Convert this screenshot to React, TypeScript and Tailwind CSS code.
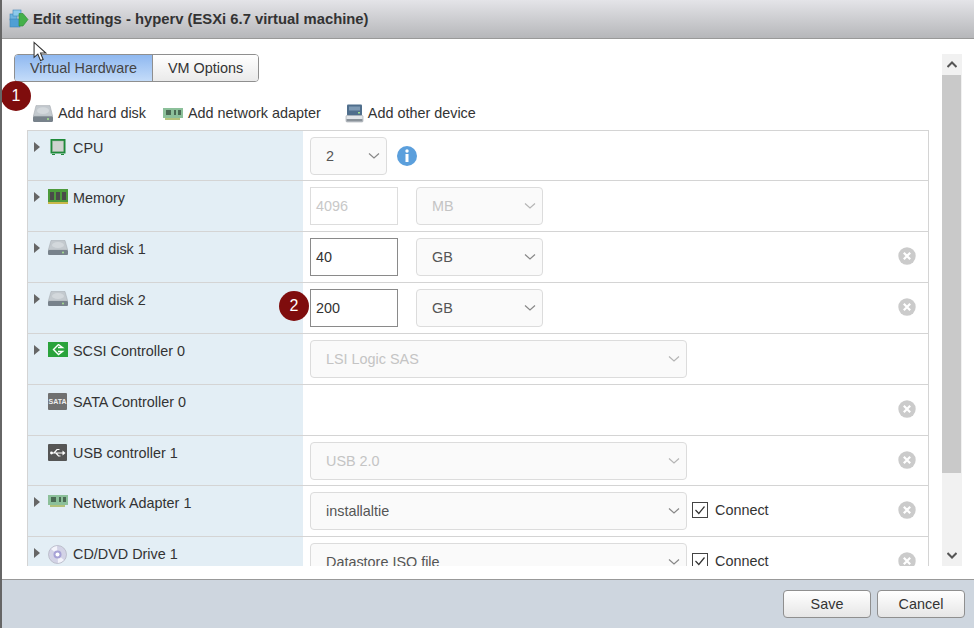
import React from "react";

const Chevron = ({ className = "text-[#777]" }: { className?: string }) => (
  <svg width="14" height="8" viewBox="0 0 14 8" className={className}>
    <path d="M2 1.5 L7 6 L12 1.5" fill="none" stroke="currentColor" strokeWidth="1.2" />
  </svg>
);

const Select = ({ value, width, disabled }: { value: string; width: string; disabled?: boolean }) => (
  <div
    className={`${width} h-[38px] flex items-center justify-between pl-[15px] pr-[5px] rounded-[4px] border border-[#dcdcdc] bg-[#fafafa] ${
      disabled ? "text-[#c4c4c4]" : "text-[#555]"
    }`}
  >
    <span className="pt-[1px]">{value}</span>
    <Chevron className={disabled ? "text-[#b5b5b5]" : "text-[#888]"} />
  </div>
);

const NumInput = ({ value, disabled }: { value: string; disabled?: boolean }) => (
  <div
    className={`w-[88px] h-[38px] flex items-center pl-[5px] pt-[1px] border bg-white ${
      disabled ? "border-[#ddd] text-[#c8c8c8]" : "border-[#8a8a8a] text-[#333]"
    }`}
  >
    {value}
  </div>
);

const RemoveIcon = () => (
  <svg width="18" height="18" viewBox="0 0 18 18" className="absolute left-[870px] top-[15px]">
    <circle cx="9" cy="9" r="8.7" fill="#cbcbcb" />
    <path d="M5.8 5.8 L12.2 12.2 M12.2 5.8 L5.8 12.2" stroke="#fff" strokeWidth="2.2" />
  </svg>
);

const Connect = () => (
  <div className="flex items-center gap-[6px] ml-[5px] -mt-[1px] text-[#333]">
    <svg width="17" height="17" viewBox="0 0 17 17">
      <rect x="0.5" y="0.5" width="15" height="15" fill="#fff" stroke="#444" />
      <path d="M3.5 8 L6.8 11.5 L12.5 4.5" fill="none" stroke="#333" strokeWidth="1.2" />
    </svg>
    <span>Connect</span>
  </div>
);

const CpuIcon = () => (
  <svg width="20" height="16" viewBox="0 0 20 16">
    <rect x="2.5" y="0" width="15" height="14.5" fill="#1f8a3a" />
    <rect x="4.5" y="2" width="11" height="10.5" fill="#cfd3cf" stroke="#9fb09f" strokeWidth="0.5" />
    <path d="M4 15.5 H7 M13 15.5 H16" stroke="#1f8a3a" />
  </svg>
);

const MemoryIcon = () => (
  <svg width="20" height="16" viewBox="0 0 20 16">
    <rect x="0" y="0" width="20" height="15" fill="#4d9a3c" />
    <rect x="2" y="3" width="4" height="8" fill="#4a4a4a" />
    <rect x="8" y="3" width="4" height="8" fill="#4a4a4a" />
    <rect x="14" y="3" width="4" height="8" fill="#4a4a4a" />
    <rect x="0" y="13" width="20" height="2" fill="#c9b84a" />
  </svg>
);

const DiskIcon = ({ tall }: { tall?: boolean }) => (
  <svg width="20" height={tall ? 18 : 16} viewBox="0 0 20 16" preserveAspectRatio="none">
    <path d="M3 0.5 H17 L19.7 10 H0.3 Z" fill="#c3c9ce" stroke="#a3a9ae" strokeWidth="0.5" />
    <ellipse cx="10" cy="5" rx="6" ry="3" fill="#d3d8dc" />
    <rect x="0" y="10" width="20" height="5" rx="1" fill="#78828b" />
    <circle cx="15" cy="12.5" r="1" fill="#a6e08f" />
  </svg>
);

const ScsiIcon = () => (
  <svg width="20" height="16" viewBox="0 0 20 16">
    <rect x="0" y="0" width="20" height="15" fill="#2aa33c" />
    <path d="M10.5 2.5 L5.5 7.5 L10.5 12.5 L14.5 9.5 H10 M10.5 2.5 L14.5 5.5 H10" fill="none" stroke="#fff" strokeWidth="1.4" />
  </svg>
);

const SataIcon = () => (
  <div className="w-[19px] h-[17px] rounded-[1px] bg-[#707070] flex items-center justify-center text-[#eee] font-bold text-[7px] leading-none">
    SATA
  </div>
);

const UsbIcon = () => (
  <svg width="19" height="17" viewBox="0 0 19 17">
    <rect x="0" y="0" width="19" height="17" rx="1" fill="#555" />
    <circle cx="3.5" cy="9" r="1.4" fill="#fff" />
    <path d="M3.5 9 H15 M6 9 L9 5.5 H11.5 M8 9 L10.5 12 H12.5" fill="none" stroke="#fff" strokeWidth="1.2" />
    <path d="M14.5 6.5 L17.5 9 L14.5 11.5 Z" fill="#fff" />
  </svg>
);

const NicIcon = () => (
  <svg width="20" height="14" viewBox="0 0 20 14">
    <rect x="0" y="1" width="20" height="10" fill="#8cc09a" />
    <rect x="3" y="3" width="5" height="5" fill="#4a6a54" />
    <rect x="11" y="3" width="2" height="5" fill="#4a6a54" />
    <rect x="15" y="3" width="3" height="5" fill="#4a6a54" />
    <rect x="2" y="11" width="15" height="2" fill="#b4c27a" />
  </svg>
);

const DvdIcon = () => (
  <svg width="19" height="19" viewBox="0 0 19 19">
    <circle cx="9.5" cy="9.5" r="9" fill="#d3d3e6" stroke="#b0b0bd" strokeWidth="0.7" />
    <path d="M9.5 9.5 L3 4 A9 9 0 0 1 9 1 Z M9.5 9.5 L16 15 A9 9 0 0 1 10 18 Z" fill="#f4f4fb" />
    <circle cx="9.5" cy="9.5" r="4" fill="#a7a2d6" />
    <circle cx="9.5" cy="9.5" r="2" fill="#fff" />
  </svg>
);

const HostIcon = () => (
  <svg width="19" height="19" viewBox="0 0 19 19">
    <rect x="2" y="0.5" width="15" height="11" rx="1" fill="#4f6e8c" />
    <rect x="4" y="2.5" width="11" height="4" fill="#7e9ab4" />
    <rect x="13" y="8" width="2" height="1.5" fill="#9ee08f" />
    <rect x="1" y="11.5" width="17" height="6.5" rx="1" fill="#e2e6ea" stroke="#8b939b" strokeWidth="0.5" />
    <rect x="1.5" y="15" width="16" height="2.5" fill="#8a9299" />
  </svg>
);

const TitleIcon = () => (
  <svg width="20" height="20" viewBox="0 0 20 20">
    <rect x="1" y="5" width="7" height="6" fill="#6db3df" stroke="#3f86b8" strokeWidth="0.6" />
    <rect x="4" y="1" width="8" height="6" fill="#8ccaeb" stroke="#3f86b8" strokeWidth="0.6" />
    <rect x="1" y="10" width="10" height="8" fill="#4f9fd4" stroke="#3f86b8" strokeWidth="0.6" />
    <path d="M10 4.5 H14 L19 10.5 L14 17 H10 Z" fill="#45b04a" stroke="#2e8a35" strokeWidth="0.6" />
  </svg>
);

const rows = [
  { name: "CPU", icon: <CpuIcon />, arrow: true, h: "h-[50px]", right: "cpu" },
  { name: "Memory", icon: <MemoryIcon />, arrow: true, h: "h-[51px]", right: "memory" },
  { name: "Hard disk 1", icon: <DiskIcon />, arrow: true, h: "h-[51px]", right: "disk1", remove: true },
  { name: "Hard disk 2", icon: <DiskIcon />, arrow: true, h: "h-[51px]", right: "disk2", remove: true },
  { name: "SCSI Controller 0", icon: <ScsiIcon />, arrow: true, h: "h-[51px]", right: "scsi" },
  { name: "SATA Controller 0", icon: <SataIcon />, arrow: false, h: "h-[51px]", right: "", remove: true },
  { name: "USB controller 1", icon: <UsbIcon />, arrow: false, h: "h-[50px]", right: "usb", remove: true },
  { name: "Network Adapter 1", icon: <NicIcon />, arrow: true, h: "h-[51px]", right: "net", remove: true },
  { name: "CD/DVD Drive 1", icon: <DvdIcon />, arrow: true, h: "h-[51px]", right: "cd", remove: true },
];

const RowBody = ({ kind }: { kind: string }) => {
  if (kind === "cpu")
    return (
      <div className="flex items-center gap-[10px]">
        <Select value="2" width="w-[77px]" />
        <svg width="20" height="20" viewBox="0 0 20 20">
          <circle cx="10" cy="10" r="10" fill="#5b9fdc" />
          <circle cx="10" cy="5" r="1.7" fill="#fff" />
          <rect x="8.5" y="8" width="3" height="8" fill="#fff" />
        </svg>
      </div>
    );
  if (kind === "memory")
    return (
      <div className="flex gap-[18px]">
        <NumInput value="4096" disabled />
        <Select value="MB" width="w-[127px]" disabled />
      </div>
    );
  if (kind === "disk1" || kind === "disk2")
    return (
      <div className="flex gap-[18px]">
        <NumInput value={kind === "disk1" ? "40" : "200"} />
        <Select value="GB" width="w-[127px]" />
      </div>
    );
  if (kind === "scsi") return <Select value="LSI Logic SAS" width="w-[377px]" disabled />;
  if (kind === "usb") return <Select value="USB 2.0" width="w-[377px]" disabled />;
  if (kind === "net")
    return (
      <div className="flex items-center">
        <Select value="installaltie" width="w-[377px]" />
        <Connect />
      </div>
    );
  if (kind === "cd")
    return (
      <div className="flex items-center">
        <Select value="Datastore ISO file" width="w-[377px]" />
        <Connect />
      </div>
    );
  return null;
};

export default function App() {
  return (
    <div className="relative w-[974px] h-[628px] overflow-hidden flex flex-col bg-white border-l-2 border-[#666] font-['Liberation_Sans',Arial,sans-serif] text-[14.4px] text-[#333]">
      {/* Title bar */}
      <div className="h-[39px] shrink-0 flex items-center gap-[4px] pl-[7px] border-b border-[#999] bg-gradient-to-b from-[#e4e4e8] to-[#b6b7ba]">
        <TitleIcon />
        <span className="font-bold text-[14.8px] text-[#333]">Edit settings - hyperv (ESXi 6.7 virtual machine)</span>
      </div>

      {/* Body */}
      <div className="flex-1 flex pt-[15px] pb-[13px] min-h-0">
        <div className="w-[940px] overflow-hidden">
          {/* Tabs */}
          <div className="flex ml-[12px] h-[28px] w-[245px] rounded-[4px] border border-[#8f8f8f] overflow-hidden">
            <div className="w-[138px] flex items-center justify-center pt-[1px] border-r border-[#8f8f8f] bg-gradient-to-b from-[#8fb8f0] to-[#c4dcf9] text-[#444]">
              Virtual Hardware
            </div>
            <div className="flex-1 flex items-center justify-center pt-[1px] bg-gradient-to-b from-white to-[#eaeaea]">
              VM Options
            </div>
          </div>

          {/* Toolbar */}
          <div className="flex items-center ml-[31px] mt-[22px] h-[19px] mb-[7px]">
            <div className="flex items-center gap-[5px]">
              <DiskIcon tall />
              <span>Add hard disk</span>
            </div>
            <div className="flex items-center gap-[5px] ml-[17px]">
              <NicIcon />
              <span>Add network adapter</span>
            </div>
            <div className="flex items-center gap-[4px] ml-[24px]">
              <HostIcon />
              <span>Add other device</span>
            </div>
          </div>

          {/* Device table */}
          <div className="ml-[25px] w-[902px] border-x border-t border-[#d4d4d4]">
            {rows.map((row) => (
              <div key={row.name} className={`relative flex ${row.h} border-b border-[#d4d4d4]`}>
                <div className="w-[275px] shrink-0 bg-[#e3eef5] flex items-start pt-[8px] pl-[6px]">
                  <div className="w-[14px] pt-[3px]">
                    {row.arrow && (
                      <svg width="6" height="10" viewBox="0 0 6 10">
                        <path d="M0 0 L6 5 L0 10 Z" fill="#666" />
                      </svg>
                    )}
                  </div>
                  <div className="w-[25px] flex justify-start">{row.icon}</div>
                  <span className="leading-[18px]">{row.name}</span>
                </div>
                <div className="flex-1 pl-[7px] pt-[6px]">
                  <RowBody kind={row.right} />
                </div>
                {row.remove && <RemoveIcon />}
              </div>
            ))}
          </div>
        </div>

        {/* Scrollbar */}
        <div className="w-[20px] flex flex-col bg-[#f1f1f1]">
          <div className="h-[21px] flex items-center justify-center text-[#555]">
            <svg width="10" height="7" viewBox="0 0 10 7">
              <path d="M0.5 6 L5 1.5 L9.5 6" fill="none" stroke="currentColor" strokeWidth="2" />
            </svg>
          </div>
          <div className="h-[398px] w-[19px] bg-[#c9c9c9]" />
          <div className="mt-auto h-[21px] flex items-center justify-center text-[#555]">
            <svg width="10" height="7" viewBox="0 0 10 7">
              <path d="M0.5 1 L5 5.5 L9.5 1" fill="none" stroke="currentColor" strokeWidth="2" />
            </svg>
          </div>
        </div>
      </div>

      {/* Footer */}
      <div className="h-[49px] shrink-0 flex items-center justify-end gap-[6px] pr-[9px] border-t border-[#999] bg-[#ced6df]">
        <div className="w-[88px] h-[28px] flex items-center justify-center pt-[1px] rounded-[4px] border border-[#8f8f8f] bg-gradient-to-b from-white to-[#e6e6e6]">
          Save
        </div>
        <div className="w-[88px] h-[28px] flex items-center justify-center pt-[1px] rounded-[4px] border border-[#8f8f8f] bg-gradient-to-b from-white to-[#e6e6e6]">
          Cancel
        </div>
      </div>

      {/* Callout badges */}
      <div className="absolute left-[-1px] top-[81px] w-[30px] h-[30px] rounded-full bg-[#7f0d0d] text-white flex items-center justify-center text-[16px]">
        1
      </div>
      <div className="absolute left-[277px] top-[291px] w-[30px] h-[30px] rounded-full bg-[#7f0d0d] text-white flex items-center justify-center text-[16px]">
        2
      </div>

      {/* Mouse pointer */}
      <svg width="15" height="22" viewBox="0 0 14 20" className="absolute left-[31px] top-[41px]">
        <path d="M1 1 L1 15 L4.5 12 L7 18 L9.5 17 L7 11 L12 11 Z" fill="#fff" stroke="#333" strokeWidth="1" />
      </svg>
    </div>
  );
}
